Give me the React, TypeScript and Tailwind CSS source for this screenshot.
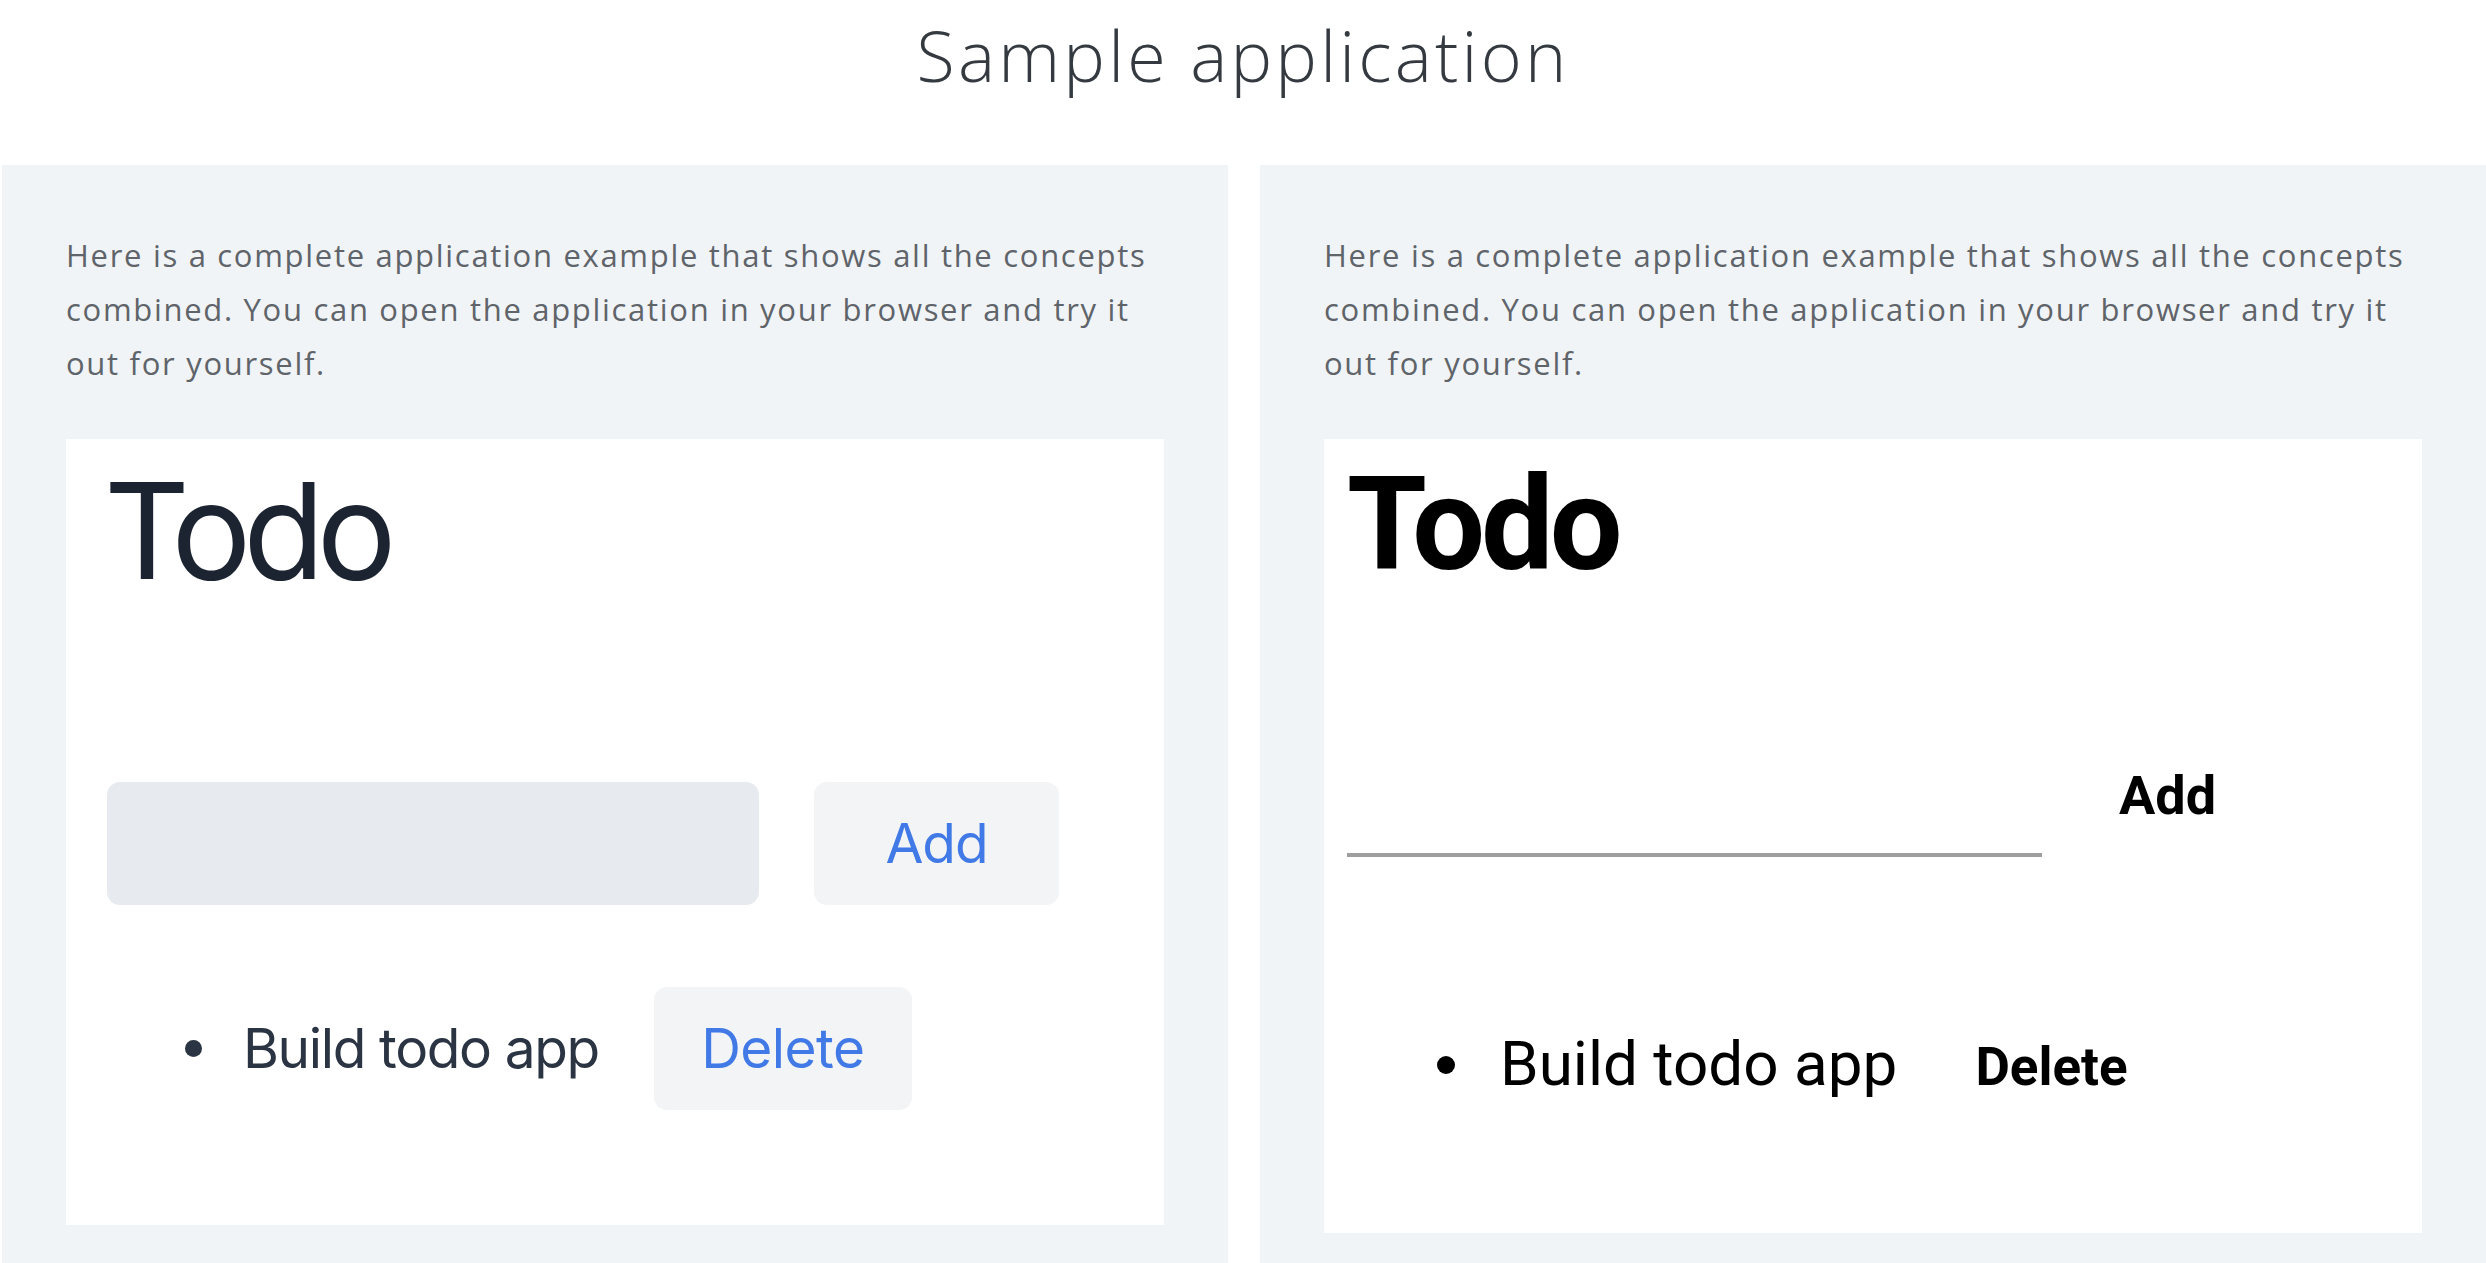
import React from "react";

function Paragraph() {
  return (
    <p className="font-['Open_Sans',sans-serif] font-normal text-[31px] leading-[54px] text-[#5f646a] tracking-[1.7px] whitespace-nowrap mb-[49px]">
      Here is a complete application example that shows all the concepts
      <br />
      combined. You can open the application in your browser and try it
      <br />
      out for yourself.
    </p>
  );
}

function WebTodo() {
  return (
    <div className="bg-white h-[786px] pl-[41px] pt-[25px] flex flex-col font-['Inter',sans-serif]">
      <h2 className="-ml-[3px] text-[133px] leading-none font-normal text-[#1d2431] tracking-[-8px]">Todo</h2>
      <div className="flex mt-[185px]">
        <div className="w-[652px] h-[123px] rounded-[13px] bg-[#e7eaef]" />
        <button className="ml-[55px] w-[245px] h-[123px] rounded-[13px] bg-[#f3f4f6] flex items-center justify-center text-[55px] leading-none text-[#4179e6] tracking-[-0.02em]">
          Add
        </button>
      </div>
      <ul className="flex items-center mt-[82px]">
        <li className="flex items-center">
          <span className="ml-[78px] w-[17px] h-[17px] rounded-full bg-[#2b3443]" />
          <span className="ml-[41px] text-[55px] leading-none text-[#2b3443] tracking-[-0.025em]">Build todo app</span>
          <button className="ml-[55px] w-[258px] h-[123px] rounded-[13px] bg-[#f3f4f6] flex items-center justify-center text-[55px] leading-none text-[#4179e6] tracking-[-0.01em]">
            Delete
          </button>
        </li>
      </ul>
    </div>
  );
}

function NativeTodo() {
  return (
    <div className="bg-white h-[794px] pl-[23px] pt-[21px] flex flex-col font-['Roboto',sans-serif] text-black">
      <h2 className="text-[129px] leading-none font-bold tracking-[-0.03em]">Todo</h2>
      <div className="flex items-start mt-[180px]">
        <div className="w-[695px] h-[88px] border-b-[4px] border-[#9e9e9e]" />
        <span className="ml-[77px] text-[54px] leading-none font-bold">Add</span>
      </div>
      <ul className="flex mt-[176px]">
        <li className="flex items-start">
          <span className="ml-[90px] mt-[23px] w-[18px] h-[18px] rounded-full bg-black" />
          <span className="ml-[45px] text-[62px] leading-none font-normal">Build todo app</span>
          <span className="ml-[78px] mt-[8px] text-[53px] leading-none font-bold">Delete</span>
        </li>
      </ul>
    </div>
  );
}

export default function App() {
  return (
    <div className="min-h-screen bg-white overflow-hidden">
      <header className="h-[165px] pt-[20px] text-center">
        <h1 className="font-['Open_Sans',sans-serif] font-light text-[70px] leading-none text-[#343a40] tracking-[3.2px]">
          Sample application
        </h1>
      </header>
      <div className="flex gap-[32px] pl-[2px]">
        <section className="flex-1 bg-[#f1f4f7] px-[64px] pt-[63px] pb-[64px]">
          <Paragraph />
          <WebTodo />
        </section>
        <section className="flex-1 bg-[#f1f4f7] px-[64px] pt-[63px] pb-[64px]">
          <Paragraph />
          <NativeTodo />
        </section>
      </div>
    </div>
  );
}
